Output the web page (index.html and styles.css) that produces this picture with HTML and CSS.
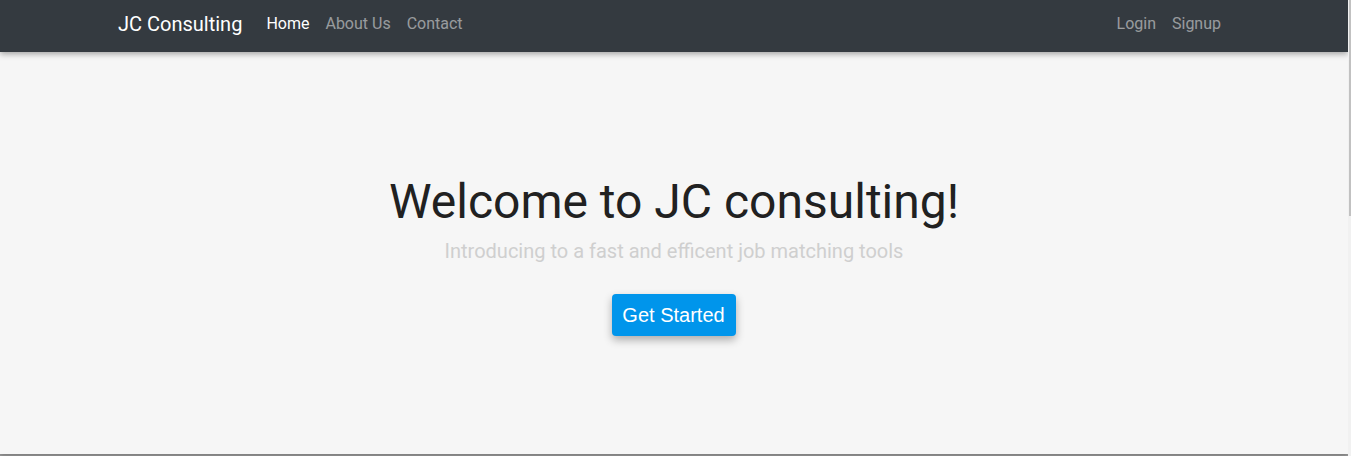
FILE: index.html
```html
<!DOCTYPE html>
<html lang="en">
<head>
<meta charset="utf-8">
<title>JC Consulting</title>
<link rel="stylesheet" href="styles.css">
</head>
<body>
<nav class="navbar">
  <div class="container">
    <a class="brand" href="#">JC Consulting</a>
    <ul class="nav nav-main">
      <li><a class="nav-link active" href="#">Home</a></li>
      <li><a class="nav-link" href="#">About Us</a></li>
      <li><a class="nav-link" href="#">Contact</a></li>
    </ul>
    <ul class="nav nav-right">
      <li><a class="nav-link" href="#">Login</a></li>
      <li><a class="nav-link" href="#">Signup</a></li>
    </ul>
  </div>
</nav>
<section class="hero">
  <h1 class="hero-title">Welcome to JC consulting!</h1>
  <p class="hero-sub">Introducing to a fast and efficent job matching tools</p>
  <a class="btn" href="#">Get Started</a>
</section>
<section class="below"></section>
<div class="scroll-thumb"></div>
</body>
</html>
```
FILE: styles.css
```css
html::-webkit-scrollbar { width: 0; height: 0; }

* { box-sizing: border-box; }

html {
  background: #f1f1f1;
}

body {
  margin: 0 3px 0 0;
  font-family: Roboto, "Liberation Sans", sans-serif;
  background: #f5f5f5;
}

a { text-decoration: none; }

.scroll-thumb {
  position: fixed;
  top: 0;
  right: 0;
  width: 2px;
  height: 216px;
  background: #c1c1c1;
}

.navbar {
  position: relative;
  z-index: 2;
  height: 52px;
  background: #343a40;
  box-shadow: 0 2px 6px rgba(0,0,0,0.35);
}

.container {
  max-width: 1140px;
  margin: 0 auto;
  padding: 0 15px 4px 14px;
  height: 100%;
  display: flex;
  align-items: center;
}

.brand {
  color: #fff;
  font-size: 20px;
  margin-right: 16px;
  line-height: 30px;
}

.nav {
  list-style: none;
  margin: 0;
  padding: 0;
  display: flex;
}

.nav-right { margin-left: auto; }

.nav-link {
  display: block;
  padding: 8px;
  font-size: 16px;
  line-height: 24px;
  color: rgba(255,255,255,0.5);
}

.nav-link.active { color: #fff; }

.hero {
  position: relative;
  z-index: 1;
  height: 402px;
  display: flex;
  flex-direction: column;
  align-items: center;
  justify-content: center;
  padding-top: 3px;
  background: #f6f6f6;
  box-shadow: 0 2px 5px rgba(0,0,0,0.25);
}

.hero-title {
  margin: 0;
  font-size: 48px;
  font-weight: 400;
  line-height: 58px;
  color: #212121;
}

.hero-sub {
  margin: 5px 0 28px;
  font-size: 20px;
  line-height: 30px;
  color: #cfcfcf;
}

.btn {
  display: block;
  padding: 0 11px 0 10px;
  height: 42px;
  line-height: 42px;
  background: #0095eb;
  color: #fff;
  font-family: "Liberation Sans", Arial, sans-serif;
  font-size: 20px;
  border-radius: 4px;
  box-shadow: 0 4px 8px rgba(0,0,0,0.3);
}

.below {
  height: 560px;
  background: #a0a0a0;
}
```
